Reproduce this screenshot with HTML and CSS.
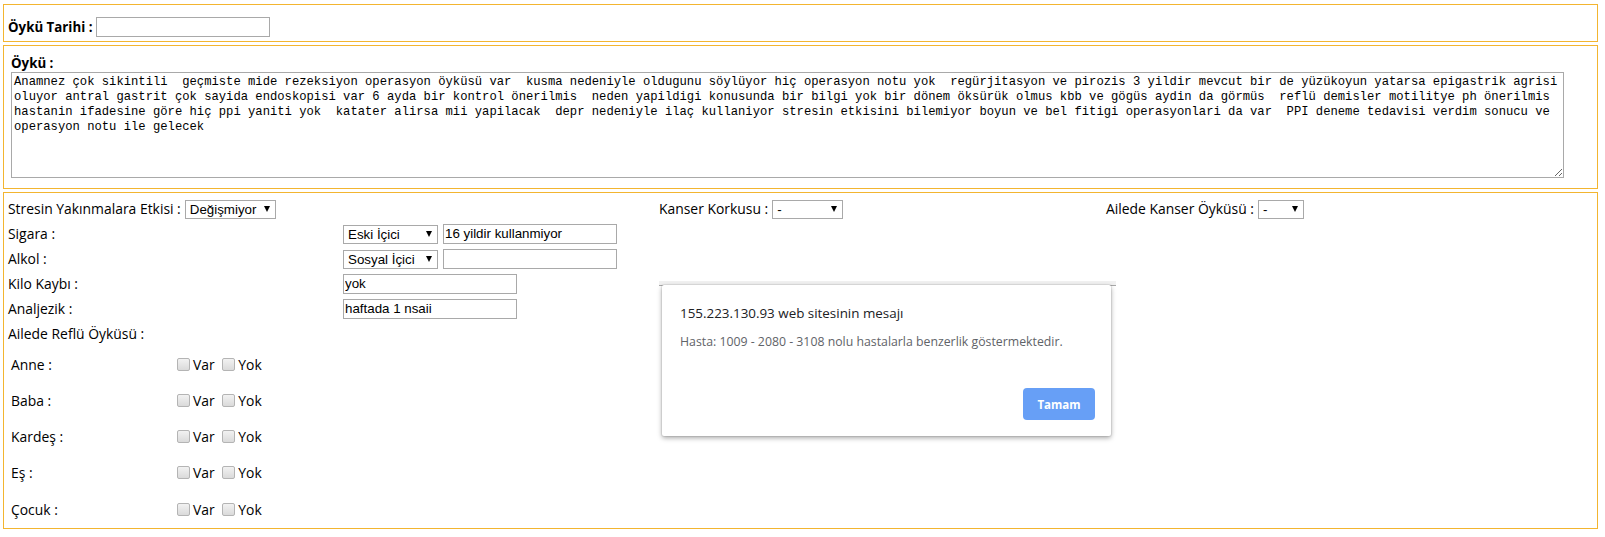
FILE: index.html
```html
<!DOCTYPE html>
<html lang="tr">
<head>
<meta charset="utf-8">
<title>Öykü</title>
<link rel="stylesheet" href="styles.css">
</head>
<body>
<div class="box box-date">
  <span class="bold">Öykü Tarihi :</span>
  <input type="text" class="inp w174">
</div>

<div class="box box-story">
  <div class="bold story-label">Öykü :</div>
  <textarea class="story">Anamnez çok sikintili  geçmiste mide rezeksiyon operasyon öyküsü var  kusma nedeniyle oldugunu söylüyor hiç operasyon notu yok  regürjitasyon ve pirozis 3 yildir mevcut bir de yüzükoyun yatarsa epigastrik agrisi oluyor antral gastrit çok sayida endoskopisi var 6 ayda bir kontrol önerilmis  neden yapildigi konusunda bir bilgi yok bir dönem öksürük olmus kbb ve gögüs aydin da görmüs  reflü demisler motilitye ph önerilmis hastanin ifadesine göre hiç ppi yaniti yok  katater alirsa mii yapilacak  depr nedeniyle ilaç kullaniyor stresin etkisini bilemiyor boyun ve bel fitigi operasyonlari da var  PPI deneme tedavisi verdim sonucu ve operasyon notu ile gelecek</textarea>
</div>

<div class="box box-details">
  <div class="col col1">
    <div class="row"><span>Stresin Yakınmalara Etkisi :</span><span class="sel w91"><select><option>Değişmiyor</option></select></span></div>
    <div class="frow"><span class="flabel">Sigara :</span><span class="ctrls"><span class="sel w95"><select><option>Eski İçici</option></select></span><input type="text" class="inp w174" value="16 yildir kullanmiyor"></span></div>
    <div class="frow"><span class="flabel">Alkol :</span><span class="ctrls"><span class="sel w95"><select><option>Sosyal İçici</option></select></span><input type="text" class="inp w174"></span></div>
    <div class="frow"><span class="flabel">Kilo Kaybı :</span><span class="ctrls"><input type="text" class="inp w174" value="yok"></span></div>
    <div class="frow"><span class="flabel">Analjezik :</span><span class="ctrls"><input type="text" class="inp w174" value="haftada 1 nsaii"></span></div>
    <div class="row">Ailede Reflü Öyküsü :</div>
    <div class="fam">
      <div class="famrow"><span class="famlabel">Anne :</span><span class="checks"><input type="checkbox" class="cb">Var <input type="checkbox" class="cb">Yok</span></div>
      <div class="famrow"><span class="famlabel">Baba :</span><span class="checks"><input type="checkbox" class="cb">Var <input type="checkbox" class="cb">Yok</span></div>
      <div class="famrow"><span class="famlabel">Kardeş :</span><span class="checks"><input type="checkbox" class="cb">Var <input type="checkbox" class="cb">Yok</span></div>
      <div class="famrow"><span class="famlabel">Eş :</span><span class="checks"><input type="checkbox" class="cb">Var <input type="checkbox" class="cb">Yok</span></div>
      <div class="famrow"><span class="famlabel">Çocuk :</span><span class="checks"><input type="checkbox" class="cb">Var <input type="checkbox" class="cb">Yok</span></div>
    </div>
  </div>
  <div class="col col2">
    <div class="row"><span>Kanser Korkusu :</span><span class="sel w71"><select><option>-</option></select></span></div>
  </div>
  <div class="col col3">
    <div class="row"><span>Ailede Kanser Öyküsü :</span><span class="sel w46"><select><option>-</option></select></span></div>
  </div>
</div>

<div class="shade"></div>
<div class="dialog">
  <div class="dlg-title">155.223.130.93 web sitesinin mesajı</div>
  <div class="dlg-msg">Hasta: 1009 - 2080 - 3108 nolu hastalarla benzerlik göstermektedir.</div>
  <div class="dlg-actions"><button class="dlg-btn">Tamam</button></div>
</div>
</body>
</html>
```

FILE: styles.css
```css
html, body { background: #fff; }
body {
  margin: 4px 7px 0 3px;
  font-family: "Open Sans", "Noto Sans", sans-serif;
  font-size: 13.9px;
  color: #000;
}
.box {
  border: 1px solid #f3b530;
  box-sizing: border-box;
}
.box + .box { margin-top: 3px; }
.bold { font-weight: 700; font-size: 13.3px; }

.box-date {
  height: 38px;
  padding: 12px 4px 4px 4px;
  display: flex;
  align-items: center;
  gap: 4px;
}

.inp {
  box-sizing: border-box;
  height: 20px;
  border: 1px solid #a9a9a9;
  padding: 0 1px;
  margin: 0;
  font-family: "Liberation Sans", Arial, sans-serif;
  font-size: 13.33px;
  color: #000;
  background: #fff;
  outline: none;
}
.w174 { width: 174px; }

.box-story {
  height: 144px;
  padding: 8px 0 0 7px;
}
.story-label { line-height: 18px; height: 18px; }
.story {
  display: block;
  box-sizing: border-box;
  margin-top: 0;
  width: 1553px;
  height: 106px;
  border: 1px solid #a9a9a9;
  padding: 2px 0 2px 2px;
  font-family: "Liberation Mono", "DejaVu Sans Mono", monospace;
  font-size: 12.2px;
  line-height: 15px;
  color: #000;
  resize: both;
  overflow: hidden;
  outline: none;
}

.box-details {
  height: 337px;
  padding: 3px 0 0 4px;
  display: grid;
  grid-template-columns: 651px 447px 1fr;
}
.row {
  height: 25px;
  display: flex;
  align-items: center;
  gap: 4px;
  white-space: nowrap;
}
.frow {
  height: 25px;
  display: flex;
  align-items: center;
}
.flabel { width: 335px; flex: none; }
.ctrls { display: flex; align-items: center; gap: 5px; }

.sel { position: relative; display: inline-block; flex: none; }
.sel select {
  -webkit-appearance: none;
  appearance: none;
  box-sizing: border-box;
  width: 100%;
  height: 19px;
  border: 1px solid #a9a9a9;
  border-radius: 0;
  background: #fff;
  padding: 0 14px 0 4px;
  margin: 0;
  font-family: "Liberation Sans", Arial, sans-serif;
  font-size: 13.33px;
  color: #000;
  outline: none;
}
.sel::after {
  content: "";
  position: absolute;
  right: 6px;
  top: 7px;
  border-left: 3.5px solid transparent;
  border-right: 3.5px solid transparent;
  border-top: 6px solid #000;
  pointer-events: none;
}
.w91 { width: 91px; }
.w95 { width: 95px; }
.w71 { width: 71px; }
.w46 { width: 46px; }

.famrow {
  height: 36.25px;
  display: flex;
  align-items: center;
}
.famlabel {
  width: 165px;
  padding-left: 3px;
  box-sizing: border-box;
  flex: none;
}
.checks { display: flex; align-items: center; white-space: pre; }
.cb {
  -webkit-appearance: none;
  appearance: none;
  width: 13px;
  height: 13px;
  margin: 0 3px 0 4px;
  border: 1px solid #b4b4b4;
  border-radius: 2px;
  background: linear-gradient(#f2f2f2, #dadada);
  box-sizing: border-box;
}

.shade {
  position: absolute;
  left: 659px;
  top: 281px;
  width: 457px;
  height: 4px;
  background: #f1f1f1;
  border-bottom: 1px solid #a8a8a8;
}
.dialog {
  position: absolute;
  left: 662px;
  top: 285px;
  width: 449px;
  height: 151px;
  box-sizing: border-box;
  background: #fff;
  border-radius: 2px;
  box-shadow: 0 0 0 1px rgba(0,0,0,0.06), 0 2px 5px rgba(0,0,0,0.35);
  padding: 18px 16px 16px 18px;
  display: flex;
  flex-direction: column;
  font-family: "Open Sans", "Noto Sans", sans-serif;
}
.dlg-title {
  font-size: 13.4px;
  line-height: 20px;
  color: #202124;
}
.dlg-msg {
  margin-top: 11px;
  font-size: 12.3px;
  line-height: 16px;
  color: #5f6368;
}
.dlg-actions {
  margin-top: auto;
  display: flex;
  justify-content: flex-end;
}
.dlg-btn {
  width: 72px;
  height: 32px;
  border: none;
  border-radius: 4px;
  background: #679ff6;
  color: #fff;
  font-family: "Open Sans", "Noto Sans", sans-serif;
  font-weight: 700;
  font-size: 11.5px;
  padding: 0;
}
```
